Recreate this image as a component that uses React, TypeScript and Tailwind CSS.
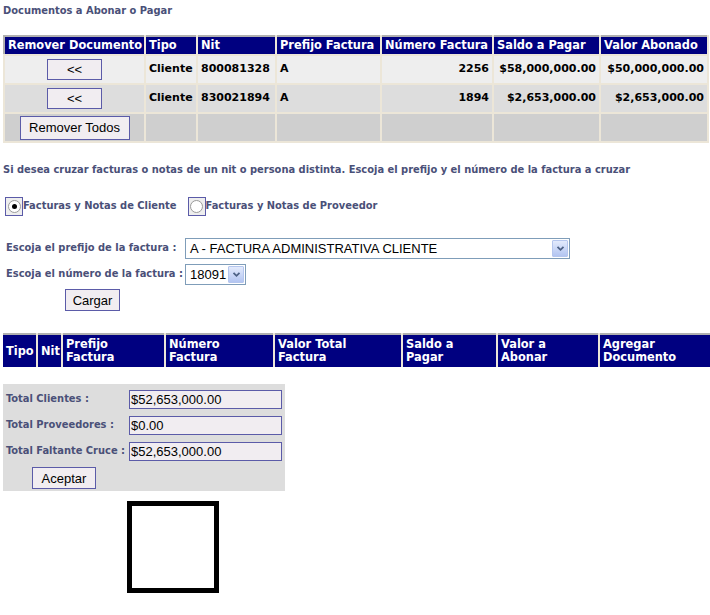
import React from "react";

const F = { fontFamily: '"DejaVu Sans", Verdana, sans-serif' };
const C = { fontFamily: '"DejaVu Sans Condensed", "DejaVu Sans", Tahoma, sans-serif', fontStretch: "condensed" as const };
const A = { fontFamily: '"Liberation Sans", Arial, sans-serif' };

function Btn({ children, className = "" }: { children: React.ReactNode; className?: string }) {
  return (
    <button
      className={`border border-[#5b5ba8] bg-[#f1edf1] text-[13px] font-normal text-black leading-none ${className}`}
      style={A}
    >
      {children}
    </button>
  );
}

function Arrow() {
  return (
    <span className="flex h-[17px] w-[16px] items-center justify-center rounded-[1px] border border-[#b5c6ee] bg-gradient-to-b from-[#e3eafc] to-[#b3c5f1]">
      <svg width="9" height="7" viewBox="0 0 9 7">
        <path d="M1.5 1.8 L4.5 4.8 L7.5 1.8" fill="none" stroke="#4d6185" strokeWidth="1.8" />
      </svg>
    </span>
  );
}

function Radio({ checked }: { checked?: boolean }) {
  return (
    <span className="flex h-[19px] w-[18px] items-center justify-center border border-[#5b5ba8] bg-[#eeeeee]">
      <span className="relative h-[13px] w-[13px] rounded-full border border-[#9a9a9a] bg-white">
        {checked && <span className="absolute left-[3px] top-[3px] h-[5px] w-[5px] rounded-full bg-black" />}
      </span>
    </span>
  );
}

export default function App() {
  const hdr = "bg-[#000080] text-white font-bold text-[11.4px] text-left px-[3px] align-middle border-x-2 border-[#ece6d8] whitespace-nowrap";
  const td = "border-2 border-[#ece6d8] font-bold text-[11px] text-black px-[3px]";
  const lbl = "text-[11px] font-bold text-[#4a5078]";
  return (
    <div className="w-[710px] h-[615px] bg-white relative" style={F}>
      <div className={"pl-[3px] pt-[4px] leading-[14px] " + lbl} style={C}>Documentos a Abonar o Pagar</div>

      <table className="ml-[3px] mt-[17px] w-[704px] table-fixed border-collapse border-t-2 border-l-2 border-t-[#b0b0b0] border-l-[#b0b0b0]">
        <colgroup>
          <col className="w-[141px]" />
          <col className="w-[52px]" />
          <col className="w-[79px]" />
          <col className="w-[105px]" />
          <col className="w-[112px]" />
          <col className="w-[107px]" />
          <col className="w-[108px]" />
        </colgroup>
        <thead>
          <tr className="h-[19px]">
            <th className={hdr + " !border-l-0"}>Remover Documento</th>
            <th className={hdr}>Tipo</th>
            <th className={hdr}>Nit</th>
            <th className={hdr}>Prefijo Factura</th>
            <th className={hdr}>Número Factura</th>
            <th className={hdr}>Saldo a Pagar</th>
            <th className={hdr}>Valor Abonado</th>
          </tr>
        </thead>
        <tbody>
          {[
            ["800081328", "2256", "$58,000,000.00", "$50,000,000.00", "bg-[#eeeeee]"],
            ["830021894", "1894", "$2,653,000.00", "$2,653,000.00", "bg-[#dddddd]"],
          ].map((r, i) => (
            <tr key={i} className={`h-[29px] ${r[4]}`}>
              <td className={td + " text-center"}>
                <Btn className="h-[21px] w-[55px] align-middle">&lt;&lt;</Btn>
              </td>
              <td className={td}>Cliente</td>
              <td className={td}>{r[0]}</td>
              <td className={td}>A</td>
              <td className={td + " text-right"}>{r[1]}</td>
              <td className={td + " text-right"}>{r[2]}</td>
              <td className={td + " text-right"}>{r[3]}</td>
            </tr>
          ))}
          <tr className="h-[29px] bg-[#cfcfcf]">
            <td className={td + " text-center"}>
              <Btn className="h-[24px] w-[110px] align-middle">Remover Todos</Btn>
            </td>
            <td className={td}></td>
            <td className={td}></td>
            <td className={td}></td>
            <td className={td}></td>
            <td className={td}></td>
            <td className={td}></td>
          </tr>
        </tbody>
      </table>

      <div className={"pl-[3px] mt-[20px] leading-[14px] " + lbl} style={C}>
        Si desea cruzar facturas o notas de un nit o persona distinta. Escoja el prefijo y el número de la factura a cruzar
      </div>

      <div className={"flex items-center pl-[5px] mt-[20px] " + lbl} style={C}>
        <Radio checked />
        <span className="ml-0">Facturas y Notas de Cliente</span>
        <span className="ml-[11px]"><Radio /></span>
        <span className="ml-0">Facturas y Notas de Proveedor</span>
      </div>

      <div className={"mt-[22px] pl-[6px] flex items-center " + lbl} style={C}>
        <span className="w-[179px]">Escoja el prefijo de la factura :</span>
        <span className="flex h-[21px] w-[385px] items-center justify-between border border-[#7f9db9] bg-white pl-[4px] pr-[1px] text-[13px] font-normal text-black" style={A}>
          A - FACTURA ADMINISTRATIVA CLIENTE
          <Arrow />
        </span>
      </div>
      <div className={"mt-[5px] pl-[6px] flex items-center " + lbl} style={C}>
        <span className="w-[179px]">Escoja el número de la factura :</span>
        <span className="flex h-[21px] w-[61px] items-center justify-between border border-[#7f9db9] bg-white pl-[4px] pr-[1px] text-[13px] font-normal text-black" style={A}>
          18091
          <Arrow />
        </span>
      </div>
      <div className="mt-[4px] pl-[65px] flex">
        <Btn className="h-[22px] w-[55px]">Cargar</Btn>
      </div>

      <table className="ml-[3px] mt-[22px] w-[707px] table-fixed border-collapse border-t-2 border-[#b0b0b0]">
        <colgroup>
          <col className="w-[34px]" />
          <col className="w-[25px]" />
          <col className="w-[103px]" />
          <col className="w-[109px]" />
          <col className="w-[128px]" />
          <col className="w-[95px]" />
          <col className="w-[102px]" />
          <col className="w-[111px]" />
        </colgroup>
        <thead>
          <tr className="h-[33px]">
            <th className={hdr + " !border-l-0 leading-[13px]"}>Tipo</th>
            <th className={hdr + " leading-[13px]"}>Nit</th>
            <th className={hdr + " leading-[13px]"}>Prefijo<br />Factura</th>
            <th className={hdr + " leading-[13px]"}>Número<br />Factura</th>
            <th className={hdr + " leading-[13px]"}>Valor Total<br />Factura</th>
            <th className={hdr + " leading-[13px]"}>Saldo a<br />Pagar</th>
            <th className={hdr + " leading-[13px]"}>Valor a<br />Abonar</th>
            <th className={hdr + " !border-r-0 leading-[13px]"}>Agregar<br />Documento</th>
          </tr>
        </thead>
      </table>

      <div className={"ml-[3px] mt-[17px] w-[282px] h-[107px] bg-[#dddddd] pt-[6px] " + lbl} style={C}>
        {[
          ["Total Clientes :", "$52,653,000.00"],
          ["Total Proveedores :", "$0.00"],
          ["Total Faltante Cruce :", "$52,653,000.00"],
        ].map(([l, v], i) => (
          <div key={i} className="flex items-center h-[19px] mb-[7px]">
            <span className="w-[126px] pl-[3px] whitespace-nowrap">{l}</span>
            <span className="flex h-[19px] w-[153px] items-center border border-[#5b5ba8] bg-[#f1edf1] pl-px text-[13px] font-normal text-black" style={A}>
              {v}
            </span>
          </div>
        ))}
        <div className="pl-[29px] -mt-px flex">
          <Btn className="h-[22px] w-[64px]">Aceptar</Btn>
        </div>
      </div>

      <div className="ml-[127px] mt-[10px] h-[92px] w-[92px] border-[5px] border-black" />
    </div>
  );
}
